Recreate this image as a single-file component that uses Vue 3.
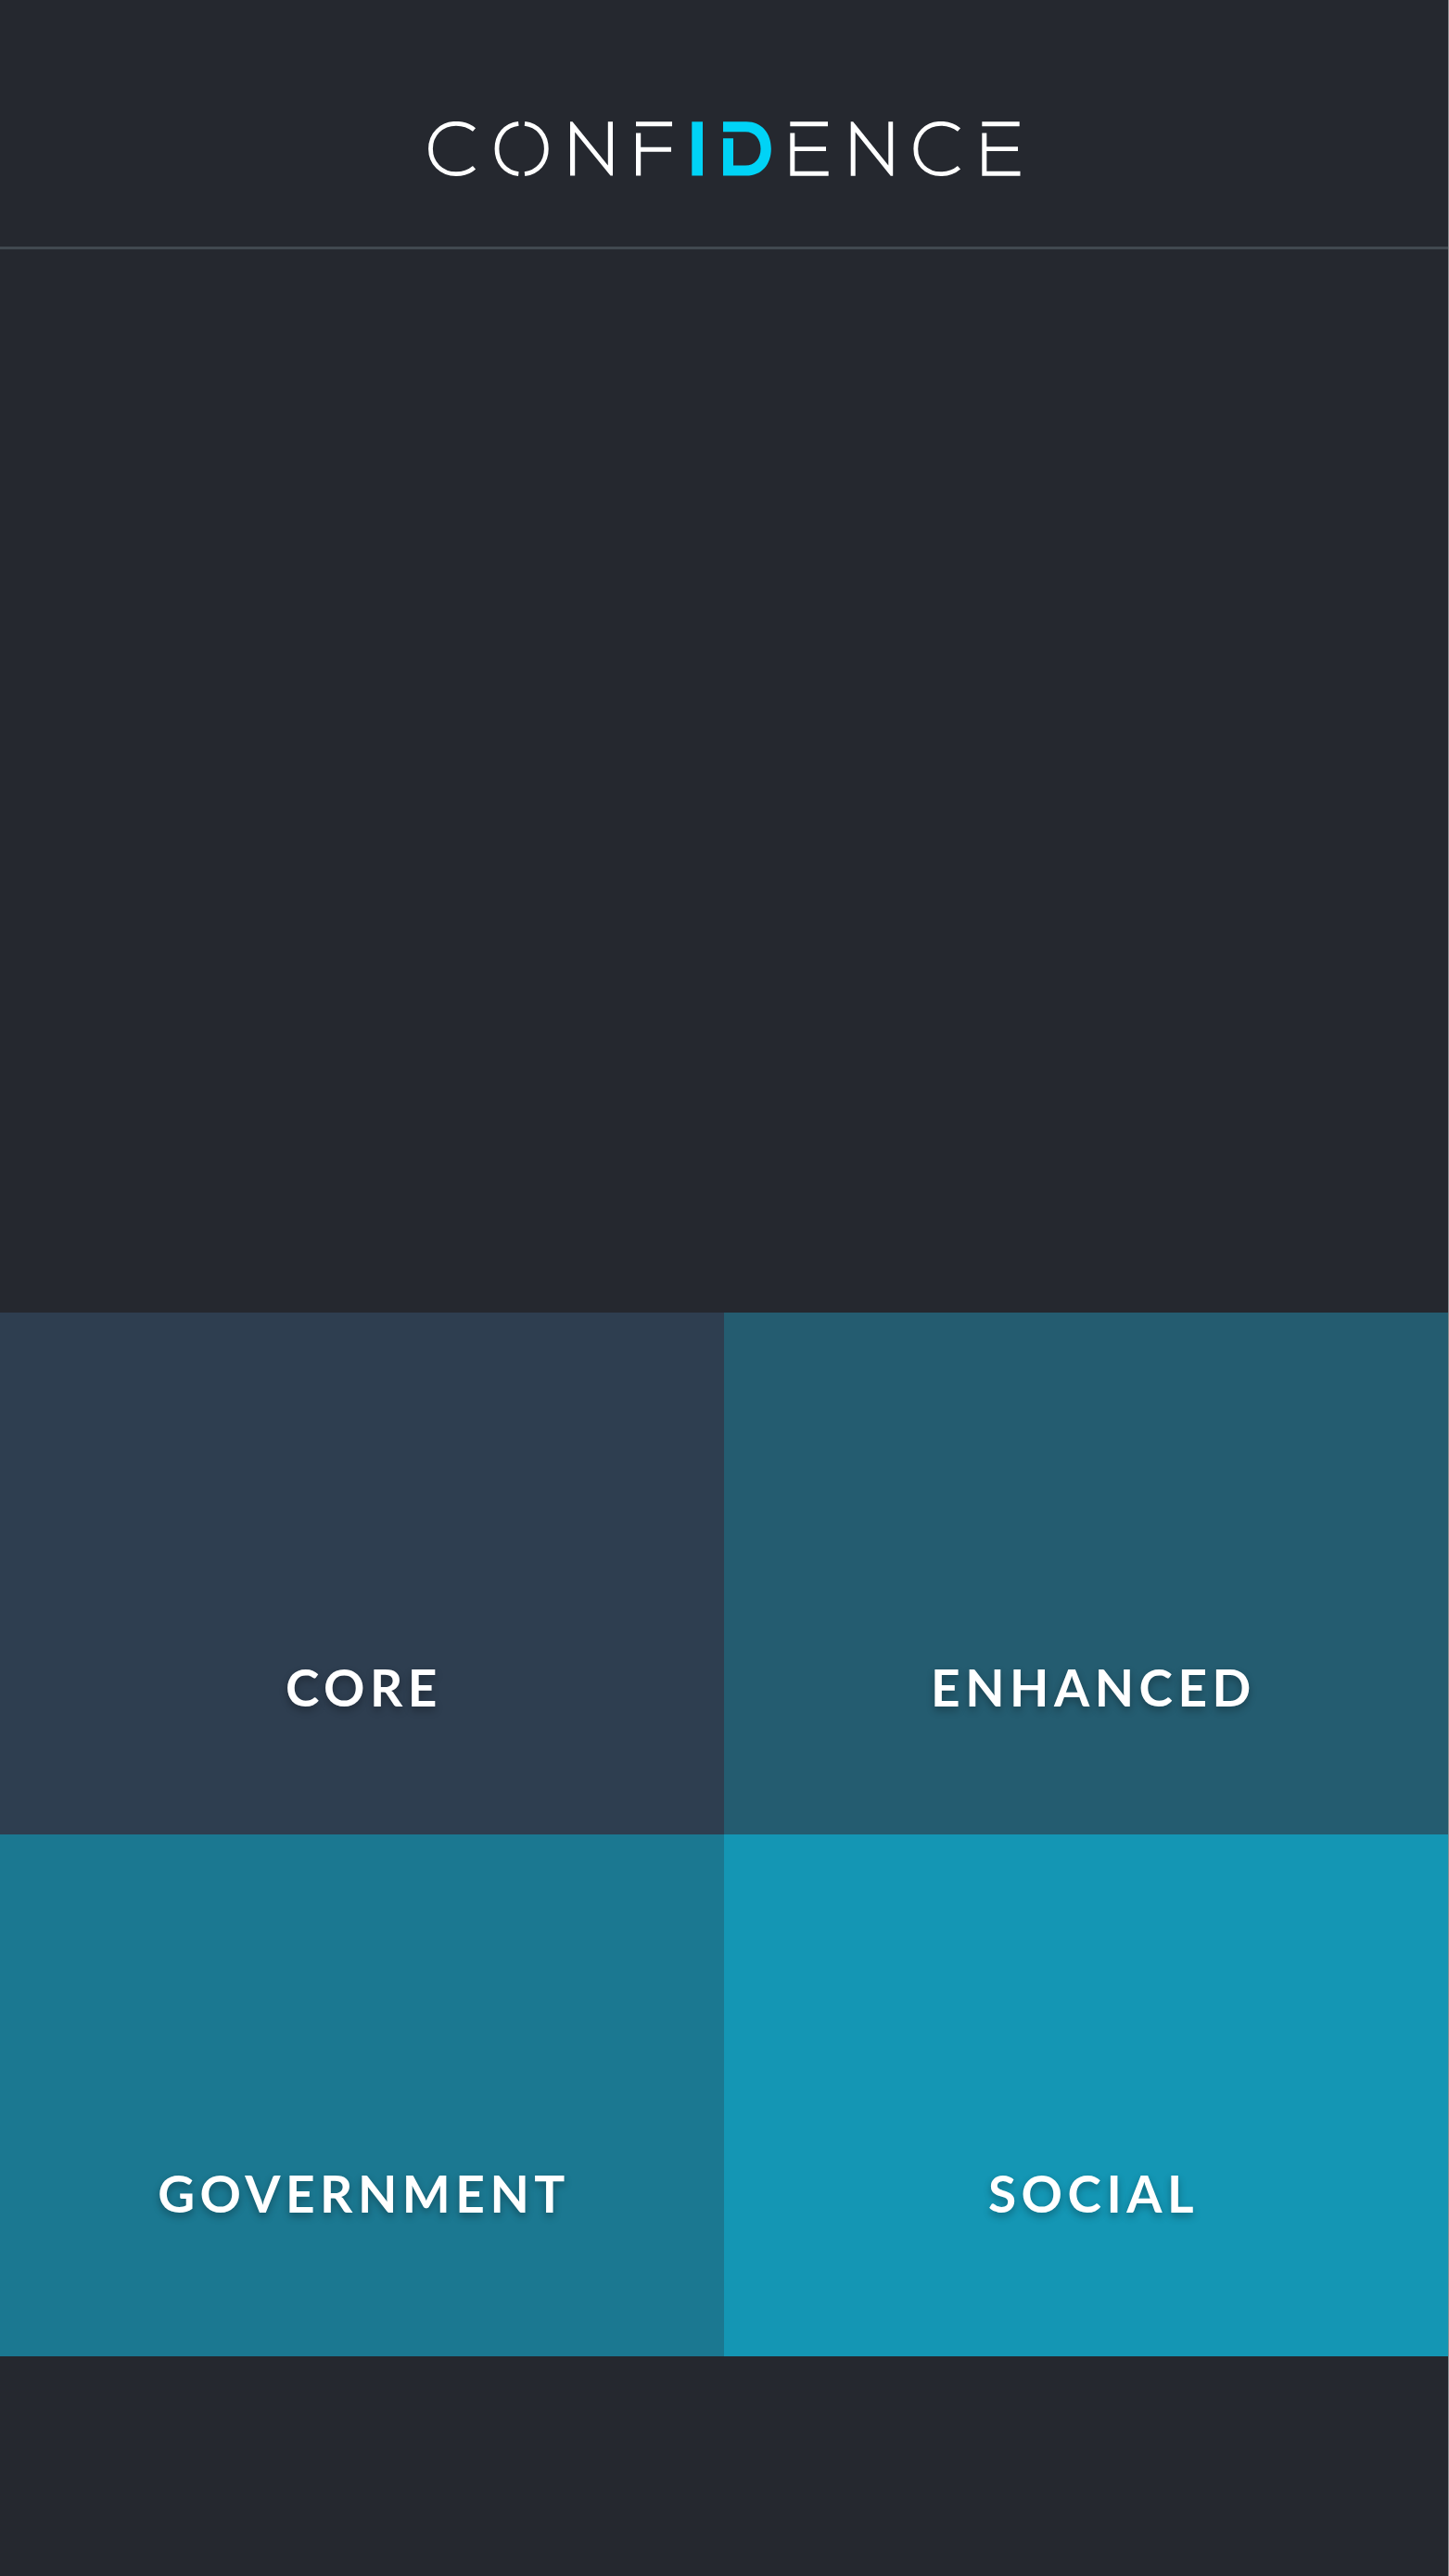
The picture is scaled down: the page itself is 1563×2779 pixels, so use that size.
<script setup>
const services = [
  { id: 'core', label: 'CORE' },
  { id: 'enhanced', label: 'ENHANCED' },
  { id: 'government', label: 'GOVERNMENT' },
  { id: 'social', label: 'SOCIAL' },
]
</script>

<template>
  <div class="page">
    <header class="header">
      <svg class="logo" viewBox="0 0 640 60" role="img" aria-label="Confidence">
        <g fill="none" stroke="#fff" stroke-width="4.8">
          <path d="M50.500 9C45 4.500 38 2.300 31 2.300C15 2.300 3.500 14 3.500 29.500S15 56.700 31 56.700C38 56.700 45 54.500 50.500 49.800" />
          <path d="M98.300 2.400C84 4 75 15 75 29.500S84 55 98.300 56.600" />
          <path d="M105 2.400C119 4 128.300 15 128.300 29.500S119 55 105 56.600" />
          <path d="M573.500 9C568 4.500 561 2.300 554 2.300C538 2.300 526.800 14 526.800 29.500S538 56.700 554 56.700C561 56.700 568 54.500 573.500 49.800" />
        </g>
        <g fill="#fff">
          <path d="M154 58.500V.3H156.500L194.800 47.500V.3H200V58.500H197.500L159.200 11.500V58.500Z" />
          <path d="M225 .3H264V5.300H225ZM225 12.500H230.200V27.800H263V32.800H230.200V58.500H225Z" />
          <path d="M391.300 .3H432V5.300H391.300ZM391.300 12.500H396.300V27.200H430V32H396.300V53.800H432.700V58.700H391.300Z" />
          <path d="M456.700 58.700V.3H459.200L497.300 47.500V.3H502.200V58.700H499.700L461.700 11.500V58.700Z" />
          <path d="M598.300 .3H638.700V5.300H598.300ZM598.300 12.500H603.300V27.200H637V32H603.300V53.800H639.500V58.700H598.300Z" />
        </g>
        <g fill="#00d3f6">
          <path d="M285.300 .3H297V58.500H285.300Z" />
          <path d="M319 .3H344C361 .3 370.800 13 370.800 29.400S361 58.500 344 58.500H319V18.200H330V47.500H343C353.500 47.500 359.500 39.500 359.500 29.400S353.500 11.200 343 11.200H319Z" />
        </g>
      </svg>
    </header>

    <main>
      <section class="hero"></section>
      <nav class="services" aria-label="Services">
        <a v-for="service in services" :key="service.id" href="#" class="service" :class="service.id">
          {{ service.label }}
        </a>
      </nav>
    </main>
  </div>
</template>

<style>
body {
  background: #25282f;
}
</style>

<style scoped>
.page {
  min-height: 100vh;
  box-sizing: border-box;
  border-right: 1px solid #8f9194;
  background: #25282f;
  font-family: Lato, "Open Sans", sans-serif;
}

.header {
  display: flex;
  justify-content: center;
  padding: 131px 0 75px;
  border-bottom: 3px solid #414950;
}

.logo {
  display: block;
  width: 640px;
  height: 60px;
}

.hero {
  height: 1147px;
}

.services {
  display: grid;
  grid-template-columns: 1fr 1fr;
  grid-auto-rows: 563px;
}

.service {
  display: flex;
  align-items: flex-end;
  justify-content: center;
  box-sizing: border-box;
  padding: 0 0 125px 4px;
  color: #fff;
  font-size: 55px;
  font-weight: 700;
  line-height: 68px;
  letter-spacing: 0.1em;
  text-decoration: none;
  text-shadow: 0 4px 8px rgba(0, 0, 0, 0.3);
}

.core {
  background: #2e3e50;
}

.enhanced {
  padding-left: 16px;
  background: #245c70;
}

.government {
  padding-bottom: 142px;
  background: #1b7891;
}

.social {
  padding-bottom: 142px;
  padding-left: 16px;
  background: #1496b4;
}
</style>
